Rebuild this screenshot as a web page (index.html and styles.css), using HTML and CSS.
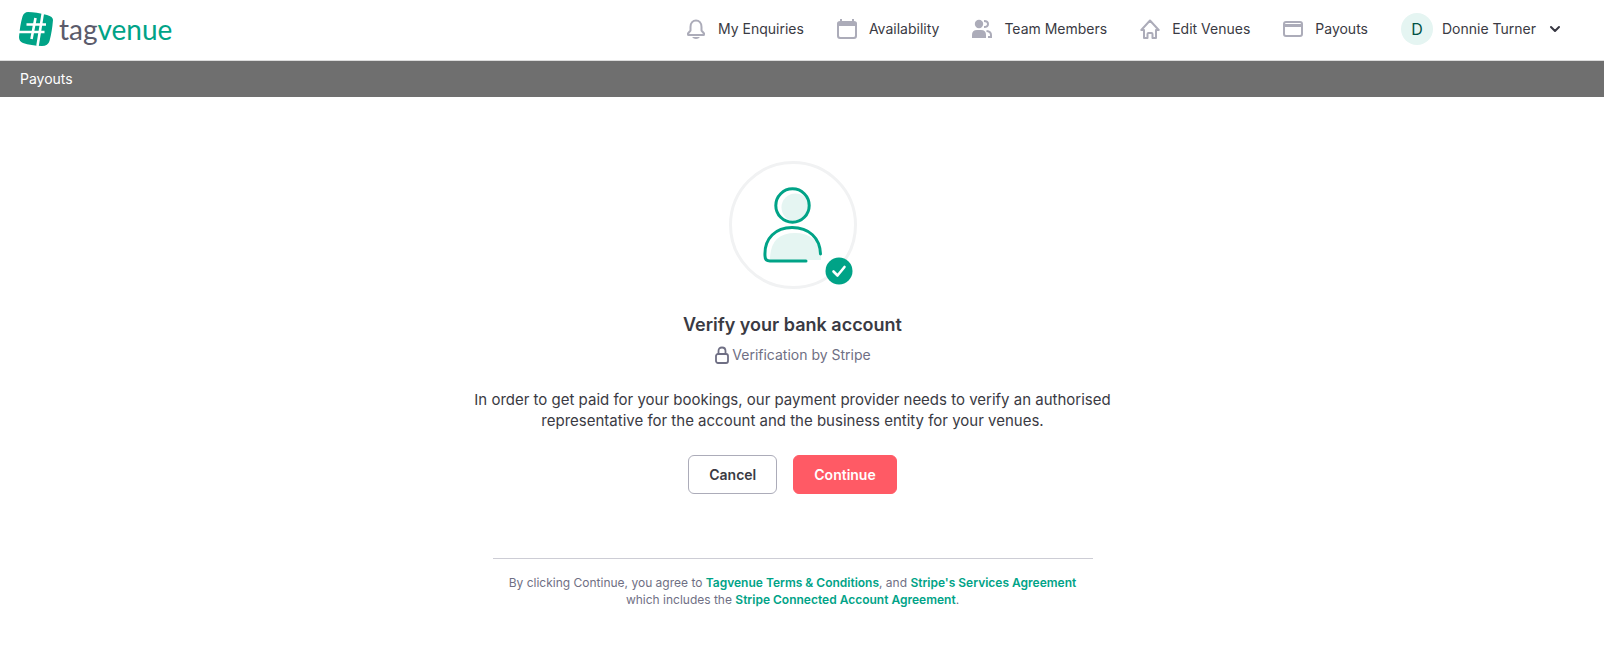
FILE: index.html
```html
<!DOCTYPE html>
<html lang="en">
<head>
<meta charset="utf-8">
<title>Payouts - Tagvenue</title>
<link rel="stylesheet" href="styles.css">
</head>
<body>
<header class="header">
  <a class="logo" href="#" aria-label="Tagvenue">
    <svg class="logo-mark" viewBox="0 0 34 34" aria-hidden="true">
      <path d="M9 0Q17 0 28 3Q34 4.500 34 8Q33 20 30.500 29Q29 34 23 34Q12 33.500 4 31Q0 29.500 0 25Q1 13 3.500 4.500Q5 0 9 0Z" fill="#00a387"/>
      <path d="M7.500 12.500H27M0 20H25.500M16.500 6L12.500 27M24 0L18.500 34" fill="none" stroke="#fff" stroke-width="2.600"/>
    </svg>
    <span class="logo-text"><span class="logo-tag">tag</span>venue</span>
  </a>
  <nav class="nav">
    <a class="nav-link" href="#">
      <svg class="icon" viewBox="0 0 20 20"><path d="M2 15.500V14.500L4.500 11.500V8C4.500 4 7 1.500 10 1.500S15.500 4 15.500 8V11.500L18 14.500V15.500Q18 16 17.500 16H2.500Q2 16 2 15.500Z" fill="none" stroke="#acacb9" stroke-width="2" stroke-linejoin="round"/><path d="M6 18H14Q12.500 20 10 20T6 18Z" fill="#acacb9"/></svg>
      My Enquiries</a>
    <a class="nav-link" href="#">
      <svg class="icon" viewBox="0 0 20 20"><path d="M3 0H5V2H15V0H17V2Q20 2 20 4.500V17Q20 20 17 20H3Q0 20 0 17V4.500Q0 2 3 2ZM2 7V16.500Q2 18 3.500 18H16.500Q18 18 18 16.500V7Z" fill="#acacb9" fill-rule="evenodd"/></svg>
      Availability</a>
    <a class="nav-link" href="#">
      <svg class="icon" viewBox="0 0 20 20"><g fill="#acacb9"><circle cx="7" cy="5" r="4.200"/><path d="M0 19V16Q0 11 5 11H9Q14 11 14 16V19Z"/></g><path d="M12 2Q16 2 16 5T12 8M14.500 12Q19 12.500 19 16V18H16" fill="none" stroke="#acacb9" stroke-width="2"/></svg>
      Team Members</a>
    <a class="nav-link" href="#">
      <svg class="icon" viewBox="0 0 20 20"><path d="M10 1.500L18.700 11H16V19H12.500V15Q12.500 14 11.500 14H8.500Q7.500 14 7.500 15V19H4V11H1.300Z" fill="none" stroke="#acacb9" stroke-width="2" stroke-linejoin="round"/></svg>
      Edit Venues</a>
    <a class="nav-link" href="#">
      <svg class="icon" viewBox="0 0 20 20"><rect x="1" y="3" width="18" height="14" rx="2" fill="none" stroke="#acacb9" stroke-width="2"/><path d="M1 5H19V8H1Z" fill="#acacb9"/></svg>
      Payouts</a>
    <button class="account" type="button">
      <span class="avatar">D</span>
      <span>Donnie Turner</span>
      <svg class="chevron" viewBox="0 0 12 12" aria-hidden="true"><path d="M2 4L6 8L10 4" fill="none" stroke="#373742" stroke-width="2" stroke-linecap="round" stroke-linejoin="round"/></svg>
    </button>
  </nav>
</header>
<div class="subbar">Payouts</div>
<main class="main">
  <svg class="hero" viewBox="0 0 128 128" aria-hidden="true">
    <circle cx="64" cy="64" r="62.500" fill="none" stroke="#f1f2f3" stroke-width="3"/>
    <circle cx="66.500" cy="46.500" r="14" fill="#e5f5f2"/>
    <path d="M41 99Q41 72 66 72T92 99Z" fill="#e5f5f2"/>
    <g fill="none" stroke="#00a387" stroke-width="3" stroke-linecap="round">
      <circle cx="63.500" cy="44.500" r="16.700"/>
      <path d="M77 100H41Q36 100 36 95C35 77 47 66.500 63 66.500C80 66.500 91 77 91.500 93"/>
    </g>
    <circle cx="110" cy="110" r="13.500" fill="#00a387"/>
    <path d="M104.500 110.500L108.500 114.500L115.500 106" fill="none" stroke="#fff" stroke-width="2.600" stroke-linecap="round" stroke-linejoin="round"/>
  </svg>
  <h1 class="title">Verify your bank account</h1>
  <p class="provider">
    <svg class="lock" viewBox="0 0 16 18" aria-hidden="true"><rect x="2" y="8" width="12" height="9" rx="2" fill="none" stroke="#6f6f84" stroke-width="1.800"/><path d="M4.500 8V5Q4.500 1.500 8 1.500T11.500 5V8" fill="none" stroke="#6f6f84" stroke-width="1.800"/></svg>
    Verification by Stripe</p>
  <p class="lead">In order to get paid for your bookings, our payment provider needs to verify an authorised representative for the account and the business entity for your venues.</p>
  <div class="actions">
    <button class="btn" type="button">Cancel</button>
    <button class="btn btn-primary" type="button">Continue</button>
  </div>
  <p class="terms">By clicking Continue, you agree to <a href="#">Tagvenue Terms &amp; Conditions</a>, and <a href="#">Stripe's Services Agreement</a> which includes the <a href="#">Stripe Connected Account Agreement</a>.</p>
</main>
</body>
</html>
```
FILE: styles.css
```css
* { box-sizing: border-box; }
body {
  margin: 0;
  background: #fff;
  color: #3a3a43;
  font-family: Inter, "Liberation Sans", sans-serif;
  font-size: 14px;
  line-height: 20px;
}
a { color: inherit; text-decoration: none; }
button { font: inherit; color: inherit; cursor: pointer; }
.header {
  display: flex;
  align-items: center;
  justify-content: space-between;
  padding: 12px 43px 14px 19px;
  border-bottom: 1px solid #dcdcdc;
}
.logo { display: flex; align-items: center; gap: 6px; }
.logo-mark { width: 34px; height: 34px; }
.logo-text {
  font-family: Lato, sans-serif;
  font-size: 28px;
  line-height: 32px;
  color: #00a387;
}
.logo-tag { color: #5b5b6b; }
.nav { display: flex; align-items: center; gap: 33px; }
.nav-link { display: flex; align-items: center; gap: 12px; }
.icon { width: 20px; height: 20px; }
.account {
  display: flex;
  align-items: center;
  gap: 9px;
  padding: 0;
  border: 0;
  background: none;
}
.avatar {
  width: 32px;
  height: 32px;
  border-radius: 50%;
  background: #e5f5f2;
  color: #005244;
  font-size: 16px;
  line-height: 32px;
}
.chevron { width: 12px; height: 12px; margin-left: 4px; }
.subbar { padding: 8px 20px; background: #6f6f6f; color: #fff; }
.main {
  display: flex;
  flex-direction: column;
  align-items: center;
  padding: 64px 19px 64px 0;
  text-align: center;
}
.hero { width: 128px; height: 128px; }
.title { margin: 24px 0 0; font-size: 18px; line-height: 24px; font-weight: 600; }
.provider {
  display: flex;
  align-items: center;
  gap: 2px;
  margin: 8px 0 0;
  color: #6f6f84;
}
.lock { width: 16px; height: 18px; }
.lead { max-width: 640px; margin: 24px 0 0; font-size: 15px; line-height: 21px; }
.actions { display: flex; gap: 16px; margin-top: 24px; }
.btn {
  padding: 9px 20px;
  border: 1px solid #acacb9;
  border-radius: 6px;
  background: #fff;
  font-weight: 600;
  line-height: 19px;
}
.btn-primary { border-color: #ff5a65; background: #ff5a65; color: #fff; }
.terms {
  width: 100%;
  max-width: 600px;
  margin: 64px 0 0;
  padding: 15px 12px 0;
  border-top: 1px solid #cdcdd5;
  color: #6f6f84;
  font-size: 12px;
  line-height: 17px;
}
.terms a { color: #00a387; font-weight: 600; }
```
